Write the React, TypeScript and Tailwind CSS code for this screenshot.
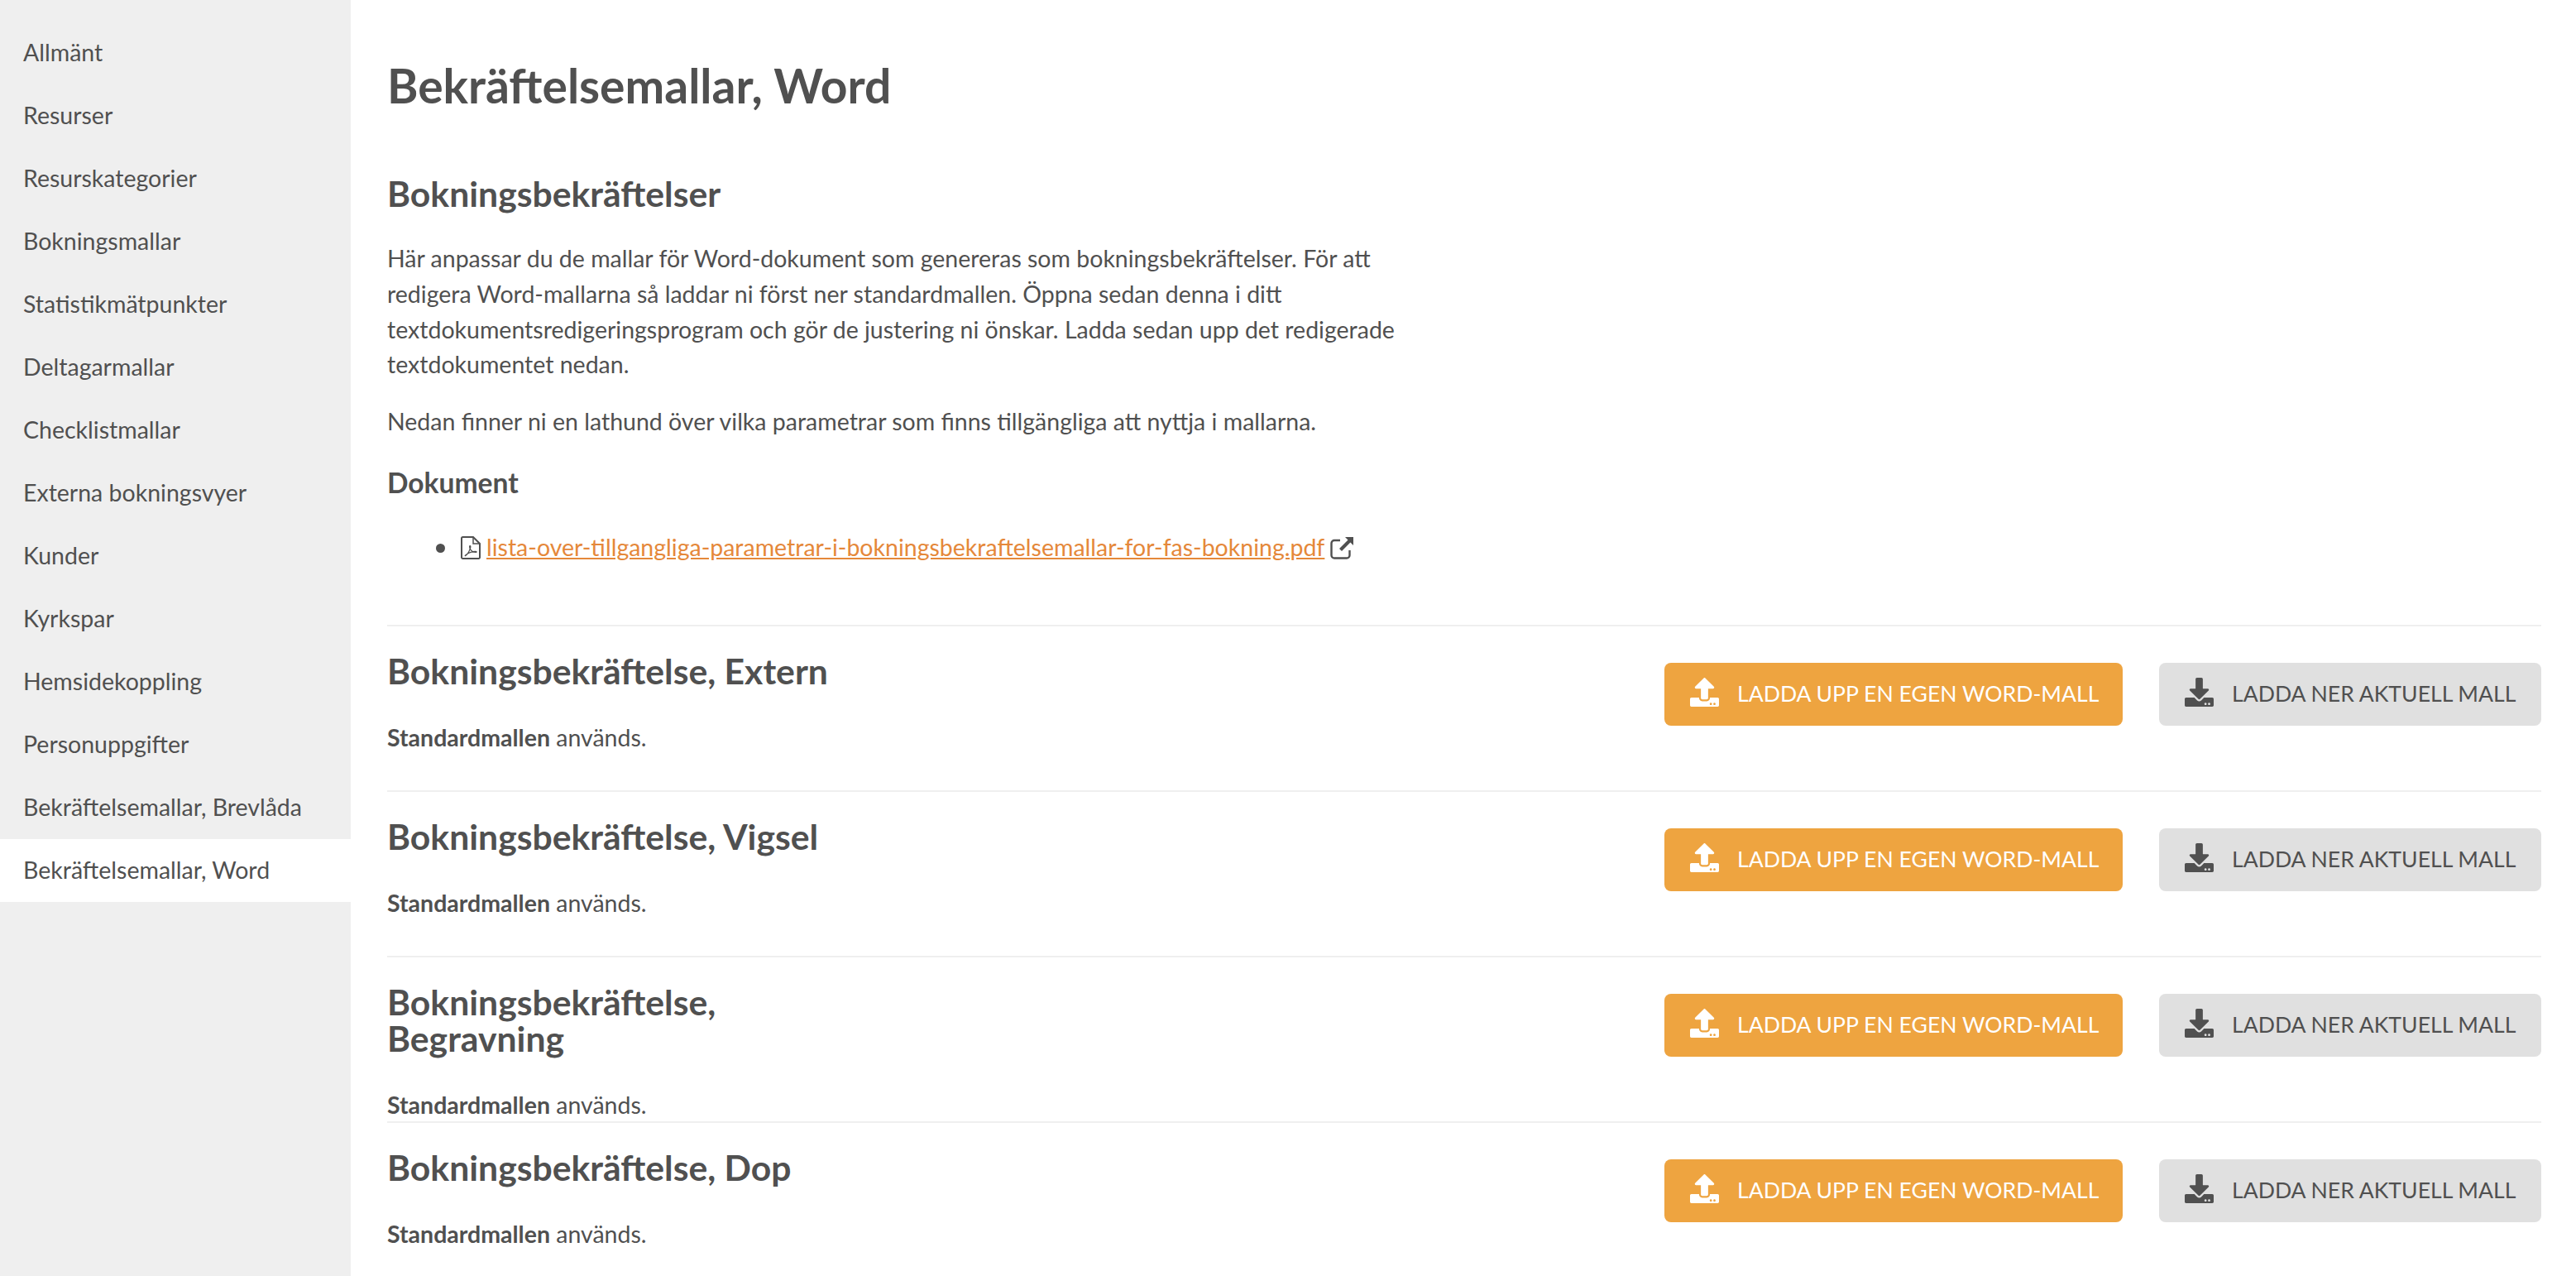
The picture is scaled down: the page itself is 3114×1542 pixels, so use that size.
import React from "react";
import { FaUpload, FaDownload } from "react-icons/fa";

const nav = [
  "Allmänt",
  "Resurser",
  "Resurskategorier",
  "Bokningsmallar",
  "Statistikmätpunkter",
  "Deltagarmallar",
  "Checklistmallar",
  "Externa bokningsvyer",
  "Kunder",
  "Kyrkspar",
  "Hemsidekoppling",
  "Personuppgifter",
  "Bekräftelsemallar, Brevlåda",
  "Bekräftelsemallar, Word",
];

const rows = [
  "Bokningsbekräftelse, Extern",
  "Bokningsbekräftelse, Vigsel",
  "Bokningsbekräftelse, Begravning",
  "Bokningsbekräftelse, Dop",
];

function PdfIcon() {
  return (
    <svg viewBox="0 0 26 30" className="w-[26px] h-[30px] shrink-0 mr-[6px]" aria-hidden="true">
      <path d="M3.500 2H16l8 8v16.500a1.500 1.500 0 0 1-1.500 1.500h-19A1.500 1.500 0 0 1 2 26.500v-23A1.500 1.500 0 0 1 3.500 2z" fill="none" stroke="#505050" strokeWidth="2" />
      <path d="M16 2v8h8" fill="none" stroke="#505050" strokeWidth="1.500" />
      <path d="M6 25c2-1 5-5 6.500-9.500.5-1.500.5-3-.3-3s-.7 2 0 3.500c1.300 3 4 4.500 7 4.500 1.300 0 1.300-1.200-.5-1.200-3.500 0-8.500 1.500-12 4.700z" fill="none" stroke="#505050" strokeWidth="1.200" />
    </svg>
  );
}

function ExternalIcon() {
  return (
    <svg viewBox="0 0 30 30" className="w-[30px] h-[30px] shrink-0 ml-[6px]" aria-hidden="true">
      <path d="M13 6H6a3.500 3.500 0 0 0-3.500 3.500V24A3.500 3.500 0 0 0 6 27.500h15a3.500 3.500 0 0 0 3.500-3.500V18" fill="none" stroke="#505050" strokeWidth="2.400" />
      <path d="M19 2h10v10l-3.600-3.600-10.400 10.600-3-3 10.500-10.400z" fill="#505050" />
    </svg>
  );
}

function Row({ title }: { title: string }) {
  return (
    <section className="h-[200px] border-t-2 border-[#efefef] flex justify-between">
      <div className="w-[580px] pt-[32px]">
        <h3 className="text-[42.700px] leading-[44px] font-bold">{title}</h3>
        <p className="mt-[37px] text-[28.500px] leading-[42px]">
          <strong className="font-bold">Standardmallen</strong> används.
        </p>
      </div>
      <div className="flex gap-[44px] pt-[44px] items-start">
        <button className="h-[76px] w-[554px] rounded-lg bg-[#eea440] text-white flex items-center pl-[31px] text-[26.600px] uppercase">
          <FaUpload className="w-[35px] h-[35px] mr-[22px] mb-[5px] shrink-0" />
          Ladda upp en egen Word-mall
        </button>
        <button className="h-[76px] w-[462px] rounded-lg bg-[#e0e0e0] text-[#505050] flex items-center pl-[31px] text-[26.600px] uppercase">
          <FaDownload className="w-[35px] h-[35px] mr-[22px] mb-[5px] shrink-0" />
          Ladda ner aktuell mall
        </button>
      </div>
    </section>
  );
}

export default function App() {
  return (
    <div className="flex h-[1542px] overflow-hidden bg-white text-[#505050] font-['Lato','Liberation_Sans',sans-serif] text-[28.500px] leading-[42.750px]">
      <aside className="w-[424px] shrink-0 bg-[#efefef] pt-[26px]">
        <ul>
          {nav.map((n) => (
            <li
              key={n}
              className={
                n === "Bekräftelsemallar, Word"
                  ? "h-[76px] flex items-center px-[28px] pb-[2px] bg-white"
                  : "h-[76px] flex items-center px-[28px] pb-[2px]"
              }
            >
              {n}
            </li>
          ))}
        </ul>
      </aside>
      <main className="flex-1 pl-[44px] pr-[42px]">
        <h1 className="text-[57px] leading-[66px] font-bold pt-[70px]">Bekräftelsemallar, Word</h1>
        <h2 className="text-[42.700px] leading-[48px] font-bold mt-[74px]">Bokningsbekräftelser</h2>
        <p className="w-[1270px] mt-[33px]">
          Här anpassar du de mallar för Word-dokument som genereras som bokningsbekräftelser. För att
          redigera Word-mallarna så laddar ni först ner standardmallen. Öppna sedan denna i ditt
          textdokumentsredigeringsprogram och gör de justering ni önskar. Ladda sedan upp det redigerade
          textdokumentet nedan.
        </p>
        <p className="mt-[26px]">
          Nedan finner ni en lathund över vilka parametrar som finns tillgängliga att nyttja i mallarna.
        </p>
        <h4 className="text-[33.600px] leading-[42px] font-bold mt-[31px]">Dokument</h4>
        <ul className="list-disc pl-[88px] mt-[35px] mb-[71px] marker:text-[34px]">
          <li>
            <span className="inline-flex items-center align-top h-[42px]">
              <PdfIcon />
              <a href="#" className="text-[#e5883a] underline">
                lista-over-tillgangliga-parametrar-i-bokningsbekraftelsemallar-for-fas-bokning.pdf
              </a>
              <ExternalIcon />
            </span>
          </li>
        </ul>
        {rows.map((r) => (
          <Row key={r} title={r} />
        ))}
      </main>
    </div>
  );
}
